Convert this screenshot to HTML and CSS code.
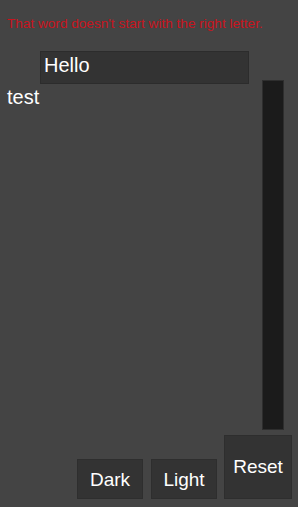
FILE: index.html
```html
<!DOCTYPE html>
<html lang="en">

<head>
    <meta charset="UTF-8">
    <meta name="viewport" content="width=device-width, initial-scale=1.0">
    <title>Word Chain</title>
    <link rel="stylesheet" href="styles.css">
</head>

<body>
    <p class="message">That word doesn't start with the right letter.</p>

    <div class="workspace">
        <div class="left">
            <div class="word-input">Hello</div>
            <div class="word-list">test</div>
        </div>
        <div class="track"></div>
    </div>

    <div class="buttons">
        <div class="button">Dark</div>
        <div class="button">Light</div>
        <div class="button button-reset">Reset</div>
    </div>
</body>

</html>
```

FILE: styles.css
```css
body {
    background-color: #444;
    color: #fff;
    font-family: 'Liberation Sans', Arial, sans-serif;
    margin: 0;
    padding: 0;
    height: 507px;
    overflow: hidden;
}

.message {
    margin: 0;
    padding: 16px 7px 0;
    font-size: 13.6px;
    line-height: 16px;
    color: #c8141e;
    white-space: nowrap;
}

.workspace {
    display: flex;
    padding-right: 14px;
    margin-top: 19px;
}

.left {
    flex: 1;
}

.word-input {
    margin-left: 40px;
    width: 209px;
    height: 33px;
    box-sizing: border-box;
    background-color: #333;
    border: 1px solid #2c2c2c;
    font-size: 20px;
    line-height: 26px;
    padding-left: 3px;
}

.word-list {
    padding-left: 7px;
    font-size: 20px;
    line-height: 26px;
}

.track {
    width: 22px;
    height: 350px;
    box-sizing: border-box;
    margin-top: 29px;
    background-color: #1b1b1b;
    border: 1px solid #2e2e2e;
}

.buttons {
    display: flex;
    justify-content: flex-end;
    align-items: flex-end;
    gap: 8px;
    padding-right: 6px;
    margin-top: 5px;
}

.button {
    width: 66px;
    height: 40px;
    box-sizing: border-box;
    background-color: #333;
    border: 1px solid #2e2e2e;
    font-size: 19px;
    line-height: 40px;
    text-align: center;
}

.button-reset {
    width: 68px;
    height: 64px;
    margin-left: -1px;
    padding-top: 20px;
    line-height: 22px;
}
```
